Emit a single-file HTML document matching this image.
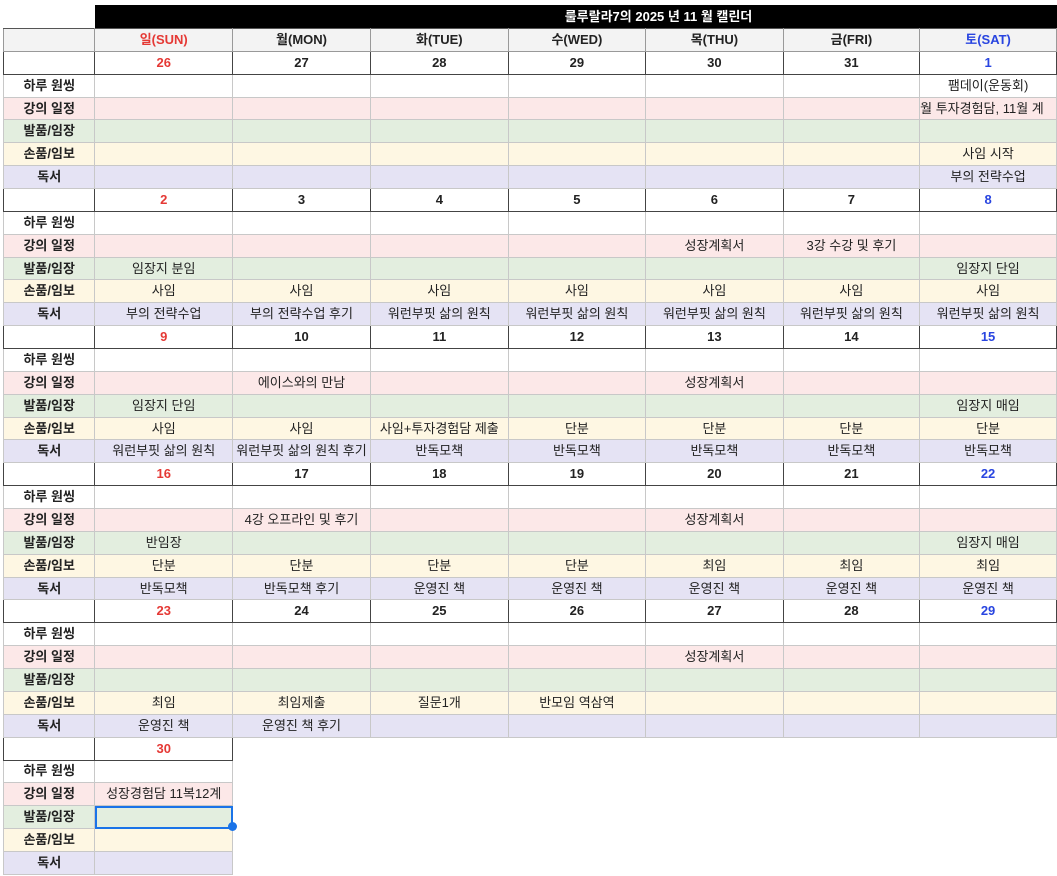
<!DOCTYPE html>
<html><head><meta charset="utf-8"><style>
body{margin:0;width:1057px;height:876px;overflow:hidden;background:#fff;font-family:"Liberation Sans","Noto Sans CJK KR",sans-serif;font-size:13px;color:#222}
.title{position:absolute;left:95px;top:5px;width:962px;height:23px;background:#000;color:#fff;font-weight:bold;line-height:23px;text-align:center;padding-left:165px;box-sizing:border-box}
table{position:absolute;left:3px;top:28px;border-collapse:collapse;table-layout:fixed}
td{height:21.86px;padding:0;border:1px solid #c8c8c8;text-align:center;white-space:nowrap;overflow:hidden;line-height:20px}
td div{display:flex;justify-content:center;overflow:hidden}
td.l{font-weight:bold}
tr.h td{background:#f3f3f3;border-color:#999;border-top:1px solid #555;font-weight:bold}
tr.h td.s{color:#e53935}tr.h td.t{color:#2945e0}
tr.d td{border:1px solid #444;font-weight:bold}
tr.d td.s{color:#e53935}tr.d td.t{color:#2945e0}
tr.r2 td{background:#fce8e8}tr.r3 td{background:#e3eedf}tr.r4 td{background:#fef7e3}tr.r5 td{background:#e5e3f4}
tr td.x{background:#fff !important;border:none !important}
td.sel{outline:2px solid #1a73e8;outline-offset:-2px;position:relative}
.dot{position:absolute;left:228px;top:822px;width:9px;height:9px;border-radius:50%;background:#1a73e8}
</style></head><body>
<div class="title">룰루랄라7의 2025 년 11 월 캘린더</div>
<table>
<colgroup><col style="width:92px"><col style="width:138px"><col style="width:138px"><col style="width:138px"><col style="width:138px"><col style="width:138px"><col style="width:137px"><col style="width:137px"></colgroup>
<tr class="h"><td></td><td class="s">일(SUN)</td><td>월(MON)</td><td>화(TUE)</td><td>수(WED)</td><td>목(THU)</td><td>금(FRI)</td><td class="t">토(SAT)</td></tr>
<tr class="d"><td></td><td class="s">26</td><td>27</td><td>28</td><td>29</td><td>30</td><td>31</td><td class="t">1</td></tr>
<tr class="r1"><td class="l">하루 원씽</td><td></td><td></td><td></td><td></td><td></td><td></td><td>팸데이(운동회)</td></tr>
<tr class="r2"><td class="l">강의 일정</td><td></td><td></td><td></td><td></td><td></td><td></td><td style="text-align:left">월 투자경험담, 11월 계</td></tr>
<tr class="r3"><td class="l">발품/임장</td><td></td><td></td><td></td><td></td><td></td><td></td><td></td></tr>
<tr class="r4"><td class="l">손품/임보</td><td></td><td></td><td></td><td></td><td></td><td></td><td>사임 시작</td></tr>
<tr class="r5"><td class="l">독서</td><td></td><td></td><td></td><td></td><td></td><td></td><td>부의 전략수업</td></tr>
<tr class="d"><td></td><td class="s">2</td><td>3</td><td>4</td><td>5</td><td>6</td><td>7</td><td class="t">8</td></tr>
<tr class="r1"><td class="l">하루 원씽</td><td></td><td></td><td></td><td></td><td></td><td></td><td></td></tr>
<tr class="r2"><td class="l">강의 일정</td><td></td><td></td><td></td><td></td><td>성장계획서</td><td>3강 수강 및 후기</td><td></td></tr>
<tr class="r3"><td class="l">발품/임장</td><td>임장지 분임</td><td></td><td></td><td></td><td></td><td></td><td>임장지 단임</td></tr>
<tr class="r4"><td class="l">손품/임보</td><td>사임</td><td>사임</td><td>사임</td><td>사임</td><td>사임</td><td>사임</td><td>사임</td></tr>
<tr class="r5"><td class="l">독서</td><td>부의 전략수업</td><td>부의 전략수업 후기</td><td>워런부핏 삶의 원칙</td><td>워런부핏 삶의 원칙</td><td>워런부핏 삶의 원칙</td><td>워런부핏 삶의 원칙</td><td>워런부핏 삶의 원칙</td></tr>
<tr class="d"><td></td><td class="s">9</td><td>10</td><td>11</td><td>12</td><td>13</td><td>14</td><td class="t">15</td></tr>
<tr class="r1"><td class="l">하루 원씽</td><td></td><td></td><td></td><td></td><td></td><td></td><td></td></tr>
<tr class="r2"><td class="l">강의 일정</td><td></td><td>에이스와의 만남</td><td></td><td></td><td>성장계획서</td><td></td><td></td></tr>
<tr class="r3"><td class="l">발품/임장</td><td>임장지 단임</td><td></td><td></td><td></td><td></td><td></td><td>임장지 매임</td></tr>
<tr class="r4"><td class="l">손품/임보</td><td>사임</td><td>사임</td><td><div>사임+투자경험담 제출</div></td><td>단분</td><td>단분</td><td>단분</td><td>단분</td></tr>
<tr class="r5"><td class="l">독서</td><td>워런부핏 삶의 원칙</td><td><div>워런부핏 삶의 원칙 후기</div></td><td>반독모책</td><td>반독모책</td><td>반독모책</td><td>반독모책</td><td>반독모책</td></tr>
<tr class="d"><td></td><td class="s">16</td><td>17</td><td>18</td><td>19</td><td>20</td><td>21</td><td class="t">22</td></tr>
<tr class="r1"><td class="l">하루 원씽</td><td></td><td></td><td></td><td></td><td></td><td></td><td></td></tr>
<tr class="r2"><td class="l">강의 일정</td><td></td><td>4강 오프라인 및 후기</td><td></td><td></td><td>성장계획서</td><td></td><td></td></tr>
<tr class="r3"><td class="l">발품/임장</td><td>반임장</td><td></td><td></td><td></td><td></td><td></td><td>임장지 매임</td></tr>
<tr class="r4"><td class="l">손품/임보</td><td>단분</td><td>단분</td><td>단분</td><td>단분</td><td>최임</td><td>최임</td><td>최임</td></tr>
<tr class="r5"><td class="l">독서</td><td>반독모책</td><td>반독모책 후기</td><td>운영진 책</td><td>운영진 책</td><td>운영진 책</td><td>운영진 책</td><td>운영진 책</td></tr>
<tr class="d"><td></td><td class="s">23</td><td>24</td><td>25</td><td>26</td><td>27</td><td>28</td><td class="t">29</td></tr>
<tr class="r1"><td class="l">하루 원씽</td><td></td><td></td><td></td><td></td><td></td><td></td><td></td></tr>
<tr class="r2"><td class="l">강의 일정</td><td></td><td></td><td></td><td></td><td>성장계획서</td><td></td><td></td></tr>
<tr class="r3"><td class="l">발품/임장</td><td></td><td></td><td></td><td></td><td></td><td></td><td></td></tr>
<tr class="r4"><td class="l">손품/임보</td><td>최임</td><td>최임제출</td><td>질문1개</td><td>반모임 역삼역</td><td></td><td></td><td></td></tr>
<tr class="r5"><td class="l">독서</td><td>운영진 책</td><td>운영진 책 후기</td><td></td><td></td><td></td><td></td><td></td></tr>
<tr class="d"><td></td><td class="s">30</td><td class="x"></td><td class="x"></td><td class="x"></td><td class="x"></td><td class="x"></td><td class="x"></td></tr>
<tr class="r1"><td class="l">하루 원씽</td><td></td><td class="x"></td><td class="x"></td><td class="x"></td><td class="x"></td><td class="x"></td><td class="x"></td></tr>
<tr class="r2"><td class="l">강의 일정</td><td>성장경험담 11복12계</td><td class="x"></td><td class="x"></td><td class="x"></td><td class="x"></td><td class="x"></td><td class="x"></td></tr>
<tr class="r3"><td class="l">발품/임장</td><td class="sel"></td><td class="x"></td><td class="x"></td><td class="x"></td><td class="x"></td><td class="x"></td><td class="x"></td></tr>
<tr class="r4"><td class="l">손품/임보</td><td></td><td class="x"></td><td class="x"></td><td class="x"></td><td class="x"></td><td class="x"></td><td class="x"></td></tr>
<tr class="r5"><td class="l">독서</td><td></td><td class="x"></td><td class="x"></td><td class="x"></td><td class="x"></td><td class="x"></td><td class="x"></td></tr>
</table>
<div class="dot"></div>
</body></html>
